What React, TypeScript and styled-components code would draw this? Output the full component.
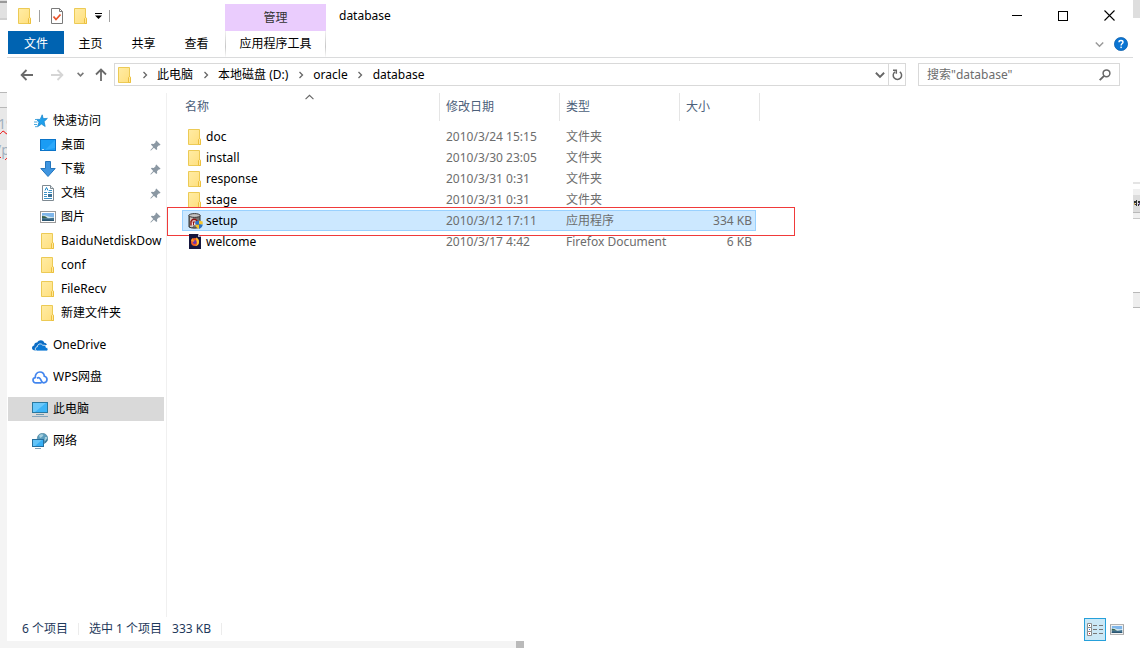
import React from "react";
import styled, { createGlobalStyle, css } from "styled-components";

const GlobalStyle = createGlobalStyle`
  * { box-sizing: border-box; }
  body {
    margin: 0;
    background: #fff;
    color: #000;
    font: 12px/16px "Noto Sans", "Noto Sans CJK SC", sans-serif;
  }
  button, input { font: inherit; color: inherit; }
  button { border: 0; padding: 0; background: none; white-space: nowrap; }
  svg { display: block; flex: none; }
`;

const Desktop = styled.div`
  display: grid;
  grid-template-columns: 7px minmax(0, 1fr) 7px;
  min-height: 100vh;
`;
const Edge = styled.div`
  display: flex;
  flex-direction: column;
  min-width: 0;
  overflow: hidden;
`;
const Band = styled.div<{ $h?: number; $c?: string }>`
  flex: ${(p) => (p.$h ? `0 0 ${p.$h}px` : "1")};
  background: ${(p) => p.$c ?? "#fff"};
`;
const EdgeText = styled.div<{ $h: number; $shift?: boolean }>`
  flex: 0 0 ${(p) => p.$h}px;
  background: #e8e8e8;
  color: #9fb0bf;
  font-size: 14px;
  line-height: 20px;
  white-space: nowrap;
  text-indent: ${(p) => (p.$shift ? "-4px" : "-2px")};
  text-decoration: underline wavy #e00 1px;
`;
const Middle = styled.div`
  display: flex;
  flex-direction: column;
  min-width: 0;
`;
const Window = styled.main`
  flex: 1;
  display: flex;
  flex-direction: column;
`;

const Header = styled.header`
  display: flex;
  height: 58px;
  border-bottom: 1px solid #dadbdc;
`;
const HeaderLeft = styled.div`
  width: 216px;
  margin-right: 2px;
  padding-left: 1px;
`;
const QuickAccess = styled.div`
  display: flex;
  align-items: center;
  height: 31px;
  padding-left: 10px;
`;
const QuickButton = styled.button<{ $w: number }>`
  width: ${(p) => p.$w}px;
  display: flex;
  justify-content: center;
`;
const QuickRule = styled.span`
  width: 1px;
  height: 12px;
  margin: 0 7px;
  background: #a0a0a0;
`;
const Tabs = styled.nav`
  display: flex;
  align-items: flex-start;
`;
const Tab = styled.button<{ $active?: boolean }>`
  width: ${(p) => (p.$active ? 56 : 53)}px;
  height: 23px;
  padding-top: 2px;
  ${(p) => p.$active && css`background: #0063b1; color: #fff;`}
`;
const Context = styled.div`
  width: 101px;
  padding-top: 4px;
`;
const ContextTitle = styled.div`
  height: 27px;
  line-height: 27px;
  text-align: center;
  color: #333;
  background: #eaccfd;
`;
const ContextTab = styled.button`
  width: 100%;
  height: 26px;
  padding-bottom: 1px;
  border: solid;
  border-width: 0 1px;
  border-image: linear-gradient(#f3f3f3, #c8c8c8 60%, #fff) 1;
`;
const HeaderRight = styled.div`
  flex: 1;
  min-width: 0;
`;
const TitleBar = styled.div`
  display: flex;
  height: 31px;
  padding-right: 1px;
`;
const Title = styled.h1`
  flex: 1;
  margin: 0;
  padding-left: 13px;
  font-size: 12px;
  font-weight: 400;
  line-height: 31px;
`;
const Caption = styled.button`
  width: 46px;
  display: flex;
  align-items: center;
  justify-content: center;
`;
const RibbonTools = styled.div`
  display: flex;
  justify-content: flex-end;
  align-items: center;
  gap: 10px;
  height: 26px;
  padding-right: 5px;
`;

const Toolbar = styled.div`
  display: flex;
  align-items: center;
  height: 35px;
  padding: 0 13px 2px 5px;
`;
const NavButton = styled.button<{ $w: number }>`
  width: ${(p) => p.$w}px;
  height: 21px;
  display: flex;
  align-items: center;
  justify-content: center;
`;
const AddressBox = styled.div`
  flex: 1;
  min-width: 0;
  display: flex;
  align-items: center;
  height: 23px;
  margin: 0 12px 0 2px;
  padding-left: 3px;
  border: 1px solid #d9d9d9;
`;
const Crumbs = styled.nav`
  flex: 1;
  display: flex;
  align-items: center;
  min-width: 0;
  overflow: hidden;
`;
const Crumb = styled.a`
  color: inherit;
  text-decoration: none;
  white-space: nowrap;
`;
const CrumbArrow = styled.span`
  width: 25px;
  display: flex;
  justify-content: center;
`;
const Refresh = styled(NavButton)`
  border-left: 1px solid #d9d9d9;
`;
const SearchBox = styled.label`
  display: flex;
  align-items: center;
  width: 202px;
  height: 23px;
  padding: 0 8px;
  border: 1px solid #d9d9d9;
`;
const SearchInput = styled.input`
  flex: 1;
  min-width: 0;
  padding: 0;
  border: 0;
  outline: 0;
  background: none;
  &::placeholder { color: #6d6d6d; opacity: 1; }
`;

const Body = styled.div`
  flex: 1;
  display: flex;
  min-height: 0;
`;
const Sidebar = styled.aside`
  width: 160px;
  flex: none;
  padding: 16px 2px 0 1px;
  border-right: 1px solid #f0f0f0;
`;
const NavGroup = styled.ul`
  margin: 0 0 8px;
  padding: 0;
  list-style: none;
`;
const NavItem = styled.a<{ $child?: boolean; $selected?: boolean }>`
  display: flex;
  align-items: center;
  gap: 5px;
  height: 24px;
  padding-left: ${(p) => (p.$child ? 32 : 24)}px;
  color: inherit;
  text-decoration: none;
  background: ${(p) => (p.$selected ? "#d9d9d9" : "none")};
`;
const NavIcon = styled.span`
  width: 16px;
  flex: none;
  display: flex;
  justify-content: center;
`;
const NavLabel = styled.span`
  flex: 1;
  min-width: 0;
  overflow: hidden;
  white-space: nowrap;
`;
const PinSlot = styled.span`
  padding-right: 3px;
`;

const Content = styled.section`
  flex: 1;
  min-width: 0;
  padding-left: 15px;
`;
const Files = styled.table`
  width: 578px;
  table-layout: fixed;
  border-collapse: separate;
  border-spacing: 0;
`;
const HeadCell = styled.th<{ $first?: boolean }>`
  position: relative;
  height: 28px;
  padding: 0 0 0 ${(p) => (p.$first ? 3 : 6)}px;
  border-right: 1px solid #e5e5e5;
  text-align: left;
  font-weight: 400;
  color: #4c607a;
`;
const SortMark = styled.span`
  position: absolute;
  top: 0;
  left: 50%;
  margin-left: -6px;
`;
const Spacer = styled.td`
  height: 5px;
  padding: 0;
`;
const Cell = styled.td`
  height: 21px;
  padding: 0 0 0 6px;
  color: #6d6d6d;
  white-space: nowrap;
`;
const NameCell = styled(Cell)`
  position: relative;
  color: #000;
`;
const SizeCell = styled(Cell)`
  padding-right: 4px;
  text-align: right;
`;
const Row = styled.tr<{ $selected?: boolean }>`
  ${(p) =>
    p.$selected &&
    css`
      & > ${Cell}, & > ${NameCell}, & > ${SizeCell} {
        background: #cce8ff;
        box-shadow: inset 0 1px #99d1ff, inset 0 -1px #99d1ff;
      }
      & > ${NameCell} {
        box-shadow: inset 1px 0 #99d1ff, inset 0 1px #99d1ff, inset 0 -1px #99d1ff;
      }
      & > ${SizeCell} {
        box-shadow: inset -1px 0 #99d1ff, inset 0 1px #99d1ff, inset 0 -1px #99d1ff;
      }
    `}
`;
const FileName = styled.span`
  display: flex;
  align-items: center;
  gap: 4px;
  height: 21px;
`;
const FileIcon = styled.span`
  width: 14px;
  display: flex;
  justify-content: center;
`;
const Marker = styled.span`
  position: absolute;
  top: -3px;
  left: -15px;
  width: 628px;
  height: 29px;
  border: 1px solid #f03a3a;
  pointer-events: none;
`;

const Status = styled.footer`
  display: flex;
  align-items: center;
  height: 24px;
  padding: 0 9px 0 15px;
  color: #1e395b;
`;
const StatusText = styled.span`
  margin-right: 10px;
  white-space: nowrap;
`;
const StatusRule = styled.span`
  width: 1px;
  height: 12px;
  margin-right: 10px;
  background: #ececec;
`;
const ViewButtons = styled.div`
  display: flex;
  align-items: center;
  gap: 4px;
  margin-left: auto;
`;
const ViewButton = styled.button<{ $on?: boolean }>`
  display: flex;
  align-items: center;
  justify-content: center;
  ${(p) => p.$on && css`width: 22px; height: 23px; background: #cbe8f6; border: 1px solid #26a0da;`}
`;
const BottomStrip = styled.div`
  display: flex;
  height: 7px;
`;

const Folder = () => (
  <svg width="14" height="16" viewBox="0 0 14 16" aria-hidden="true">
    <defs>
      <linearGradient id="folderFill" x1="0" y1="0" x2="1" y2="1">
        <stop offset="0" stopColor="#ffeca5" />
        <stop offset="1" stopColor="#ffdf7d" />
      </linearGradient>
    </defs>
    <path d="M.5.5h11v9l1 .5v5.500h-12z" fill="url(#folderFill)" stroke="#ecca55" />
    <path d="M10.500 15.500v-5l1-1 1 1v5z" fill="#ffe89b" stroke="#ecc03f" />
  </svg>
);
const Chevron = ({ dir, color = "#666", s = 8, t = 1.3 }: { dir: string; color?: string; s?: number; t?: number }) => {
  const d = { right: "M2.500 1l3 3-3 3", down: "M0.700 2.200L4 5.500l3.300-3.300", up: "M0.500 5.500L4 2l3.500 3.500" }[dir];
  return (
    <svg width={s} height={s} viewBox="0 0 8 8" fill="none" stroke={color} strokeWidth={t} aria-hidden="true">
      <path d={d} />
    </svg>
  );
};
const Arrow = ({ r = 0, color = "#6a6a6a" }: { r?: number; color?: string }) => (
  <svg width="14" height="14" viewBox="0 0 14 14" fill="none" stroke={color} strokeWidth="1.800" aria-hidden="true">
    <path d="M13 7H2M6.500 2L1.600 7l4.900 5" transform={`rotate(${r} 7 7)`} />
  </svg>
);
const Pin = () => (
  <svg width="11" height="11" viewBox="0 0 11 11" aria-label="已固定">
    <path d="M6.300.4l4.300 4.300-1 .7-.6-.2-2 2 .2 2-.9.900-2.400-2.400L1 10.500l-.6.1.1-.7 2.700-3L.9 4.600l.9-.8 2 .2 2-2.100-.3-.6z" fill="#8b98a3" />
  </svg>
);
const Picture = ({ w = 16, h = 12 }: { w?: number; h?: number }) => (
  <svg width={w} height={h} viewBox="0 0 16 12" aria-hidden="true">
    <rect x=".5" y=".5" width="15" height="11" fill="#fff" stroke="#9a9a9a" />
    <path d="M2 2h12v4H2z" fill="#7fb6ea" />
    <path d="M2 5c2-1 3-1 5 0s5 1 7 1v2H2z" fill="#d5e9ee" />
    <path d="M2 5l3 .3 3 2H2z" fill="#38604a" />
    <path d="M2 7l7 .3 5-.6V10H2z" fill="#41718f" />
    <path d="M2 8.500h7l5 .5v1H2z" fill="#2b5671" />
  </svg>
);
const Star = () => (
  <svg width="15" height="14" viewBox="0 0 15 14" aria-hidden="true">
    <path d="M9.200.8l1 3.800 4.200-.2-3.300 3.200 1.100 4.900-3.700-2.400-4 2.700 1.500-4.700-2.500-2.700 3.700 0z" fill="#1fa0ec" stroke="#1583c9" strokeWidth=".7" />
    <path d="M2 5.500h2M1 8h3.500M1 10.500h3M2 12.700h2" stroke="#4aa9e0" />
  </svg>
);
const Screen = () => (
  <svg width="16" height="12" viewBox="0 0 16 12" aria-hidden="true">
    <rect x=".5" y=".5" width="15" height="11" fill="#1a9cf4" stroke="#0b74c8" />
    <path d="M15 1v8L5 11z" fill="#3bb2ff" opacity=".6" />
    <path d="M2 10.500h2" stroke="#fff" strokeWidth=".7" />
  </svg>
);
const Download = () => (
  <svg width="16" height="16" viewBox="0 0 16 16" aria-hidden="true">
    <path d="M5.500.5h5v7h4.700L8 15.500.8 7.500h4.700z" fill="#3e95e0" stroke="#2576bd" />
  </svg>
);
const Doc = () => (
  <svg width="12" height="16" viewBox="0 0 12 16" aria-hidden="true">
    <path d="M.5.500h8l3 3v12H.5z" fill="#fff" stroke="#7f8a92" />
    <path d="M8.500.5v3h3" fill="#e3e8eb" stroke="#7f8a92" />
    <path d="M3 5.500L4.500 2.500 6 5.500" fill="none" stroke="#1a86c8" />
    <path d="M2 7.500h3M2 9.500h3M2 11.500h3M2 13.500h8M7 5.500h3M6 7.500h4" stroke="#3a92c7" />
    <path d="M6 9h4v3H6z" fill="#3a6f95" />
  </svg>
);
const Cloud = () => (
  <svg width="16" height="11" viewBox="0 0 16 11" aria-hidden="true">
    <path d="M3.700 10.500C1 10.500 0 9.500 0 8c0-1.400 1-2.300 2.200-2.400C2 3 4 2.200 5.200 2.500 6 .9 7.300.2 8.700.2c2 0 3.300 1.200 3.800 2.700 1.200 0 2 .5 2.500 1.600z" fill="#0a6cc4" />
    <path d="M5.500 11C4 11 3.300 10.200 3.300 9c0-1.300.9-2.100 2-2.200C5.500 4.800 6.700 3.900 8.200 3.900c1.200 0 2 .5 2.600 1.400 2-.6 3.300.6 3.300 2.200 1.200 0 1.900.7 1.900 1.700 0 1.100-.8 1.800-1.800 1.800z" fill="#0a78d4" stroke="#fff" strokeWidth=".8" />
  </svg>
);
const WpsCloud = () => (
  <svg width="16" height="13" viewBox="0 0 16 13" fill="none" stroke="#4386ee" strokeWidth="1.700" aria-hidden="true">
    <path d="M9.500 11.800H4C2.200 11.800 1 10.600 1 9.100c0-1.400 1-2.300 2.200-2.500C3.200 3.200 5.200 1 7.900 1c2.400 0 4.200 1.700 4.400 4.300 1.600.4 2.700 1.600 2.700 3.200 0 2-1.400 3.300-3.300 3.300-2.300 0-2.200-2.300-3.300-3.800C7.600 6.800 6 6.500 4.900 7.200" />
  </svg>
);
const Computer = () => (
  <svg width="16" height="15" viewBox="0 0 16 15" aria-hidden="true">
    <rect x=".5" y=".5" width="15" height="10" fill="#3db4f7" stroke="#2a789f" />
    <path d="M1 1h13L3 10H1z" fill="#7ed0fb" opacity=".7" />
    <path d="M4 12.500h8" stroke="#6f98ad" />
    <path d="M0 14.500h16" stroke="#86a6bd" />
  </svg>
);
const Network = () => (
  <svg width="16" height="16" viewBox="0 0 16 16" aria-hidden="true">
    <circle cx="10.500" cy="5.500" r="5.200" fill="#5b9dbd" stroke="#487f99" strokeWidth=".6" />
    <path d="M7 2.500c2-2 4-1.500 4.500-.5L10 4 8 5zM13 4l2 0 .3 2-1.300 3-1.500-2z" fill="#a5cfde" />
    <path d="M12.500 9l3-4c.3 2-.5 4-2.500 5z" fill="#3c7894" />
    <rect x=".5" y="6.500" width="11" height="7" fill="#37aff5" stroke="#266f9e" />
    <path d="M1 7h9l-7 6H1z" fill="#76cdf9" opacity=".7" />
    <path d="M3 15.500h6" stroke="#7fa0b5" />
  </svg>
);
const SetupIcon = () => (
  <svg width="15" height="16" viewBox="0 0 15 16" aria-hidden="true">
    <path d="M1 2.500h11v11.500c-2 1.500-9 1.500-11 0z" fill="#77736f" stroke="#333" />
    <path d="M2 4h3v10H2z" fill="#c9c6c2" />
    <ellipse cx="6.500" cy="2.500" rx="5.700" ry="1.900" fill="#c5c3c1" stroke="#393939" />
    <path d="M3 12.500V8.500l1.500-2h3L9 8v4" fill="#f4dede" stroke="#8e1515" strokeWidth="1.400" />
    <path d="M4.500 9h3M5.500 9v3" stroke="#8e1515" />
    <path d="M11 7.500l3.700 1v3h-3.700zM11 11.500V16c-2-1-3.700-2.500-3.700-4.500z" fill="#f5c52b" />
    <path d="M11 7.500l-3.700 1v3H11zM11 11.500V16c2-1 3.700-2.500 3.700-4.500z" fill="#2a72c8" />
  </svg>
);
const FirefoxIcon = () => (
  <svg width="12" height="15" viewBox="0 0 12 15" aria-hidden="true">
    <path d="M0 0h9l3 3v12H0z" fill="#15163e" />
    <path d="M9 0v3h3z" fill="#b9bad0" />
    <circle cx="6" cy="8" r="4" fill="#f25a28" />
    <path d="M7 3.500c3 1 4 5 2 7.300-1 1-2 1.200-3 1.200 2-1 2.800-2.500 1.500-4.500z" fill="#ffc52c" />
    <circle cx="5.700" cy="8" r="1.900" fill="#6b35b5" />
    <path d="M2 7c.5-2 1-2.500 1.500-3l1 2.200 1.500.5-1.500 1z" fill="#ff9a24" />
  </svg>
);

const quick = [
  { label: "桌面", icon: <Screen />, pinned: true },
  { label: "下载", icon: <Download />, pinned: true },
  { label: "文档", icon: <Doc />, pinned: true },
  { label: "图片", icon: <Picture />, pinned: true },
  { label: "BaiduNetdiskDow", icon: <Folder /> },
  { label: "conf", icon: <Folder /> },
  { label: "FileRecv", icon: <Folder /> },
  { label: "新建文件夹", icon: <Folder /> },
];
const roots = [
  { label: "OneDrive", icon: <Cloud /> },
  { label: "WPS网盘", icon: <WpsCloud /> },
  { label: "此电脑", icon: <Computer />, selected: true },
  { label: "网络", icon: <Network /> },
];
const files = [
  { name: "doc", date: "2010/3/24 15:15", type: "文件夹", size: "", icon: <Folder /> },
  { name: "install", date: "2010/3/30 23:05", type: "文件夹", size: "", icon: <Folder /> },
  { name: "response", date: "2010/3/31 0:31", type: "文件夹", size: "", icon: <Folder /> },
  { name: "stage", date: "2010/3/31 0:31", type: "文件夹", size: "", icon: <Folder /> },
  { name: "setup", date: "2010/3/12 17:11", type: "应用程序", size: "334 KB", icon: <SetupIcon />, selected: true },
  { name: "welcome", date: "2010/3/17 4:42", type: "Firefox Document", size: "6 KB", icon: <FirefoxIcon /> },
];
const crumbs = ["此电脑", "本地磁盘 (D:)", "oracle", "database"];

export default function App() {
  return (
    <Desktop>
      <GlobalStyle />
      <Edge>
        <Band $h={1} $c="#ddd" />
        <Band $h={2} $c="#999" />
        <Band $h={15} $c="#e1e1e1" />
        <Band $h={2} $c="#d0d0d0" />
        <Band $h={72} />
        <Band $h={1} $c="#b8b8b8" />
        <Band $h={14} $c="#f0f0f0" />
        <Band $h={1} $c="#b8b8b8" />
        <Band $h={6} $c="#e8e8e8" />
        <EdgeText $h={26}>19</EdgeText>
        <EdgeText $h={50} $shift>/p</EdgeText>
        <Band $c="#f4f4f4" />
      </Edge>
      <Middle>
        <Window>
          <Header>
            <HeaderLeft>
              <QuickAccess>
                <Folder />
                <QuickRule />
                <QuickButton $w={20} aria-label="属性">
                  <svg width="12" height="16" viewBox="0 0 12 16" fill="none">
                    <path d="M.5.500h8l3 3v12H.5z" fill="#fff" stroke="#7a7a7a" />
                    <path d="M8.500.5v3h3" stroke="#7a7a7a" />
                    <path d="M2.500 8.500l2.500 3 4.500-5" stroke="#e8532a" strokeWidth="1.800" />
                  </svg>
                </QuickButton>
                <QuickButton $w={27} aria-label="新建文件夹"><Folder /></QuickButton>
                <QuickButton $w={8} aria-label="自定义快速访问工具栏">
                  <svg width="7" height="6" viewBox="0 0 7 6"><path d="M0 0h7v1H0zM0 2.500h7L3.500 6z" fill="#000" /></svg>
                </QuickButton>
                <QuickRule />
              </QuickAccess>
              <Tabs>
                <Tab $active>文件</Tab>
                <Tab>主页</Tab>
                <Tab>共享</Tab>
                <Tab>查看</Tab>
              </Tabs>
            </HeaderLeft>
            <Context>
              <ContextTitle>管理</ContextTitle>
              <ContextTab>应用程序工具</ContextTab>
            </Context>
            <HeaderRight>
              <TitleBar>
                <Title>database</Title>
                <Caption aria-label="最小化">
                  <svg width="10" height="11" viewBox="0 0 10 11"><path d="M0 5.500h10" stroke="#000" /></svg>
                </Caption>
                <Caption aria-label="最大化">
                  <svg width="10" height="10" viewBox="0 0 10 10"><rect x=".5" y=".5" width="9" height="9" fill="none" stroke="#000" /></svg>
                </Caption>
                <Caption aria-label="关闭">
                  <svg width="11" height="11" viewBox="0 0 11 11"><path d="M.5.500l10 10M10.500.5l-10 10" stroke="#000" strokeWidth="1.100" /></svg>
                </Caption>
              </TitleBar>
              <RibbonTools>
                <button aria-label="展开功能区"><Chevron dir="down" color="#999" s={9} /></button>
                <button aria-label="帮助">
                  <svg width="14" height="14" viewBox="0 0 14 14">
                    <circle cx="7" cy="7" r="6.600" fill="#0a74d2" stroke="#0a5ba8" strokeWidth=".7" />
                    <path d="M5 5.200C5 3 9 3 9 5.200 9 6.600 7.100 6.600 7.100 8.400" fill="none" stroke="#fff" strokeWidth="1.400" />
                    <rect x="6.400" y="9.600" width="1.400" height="1.500" fill="#fff" />
                  </svg>
                </button>
              </RibbonTools>
            </HeaderRight>
          </Header>

          <Toolbar>
            <NavButton $w={30} aria-label="后退"><Arrow /></NavButton>
            <NavButton $w={30} aria-label="前进"><Arrow r={180} color="#d5d5d5" /></NavButton>
            <NavButton $w={17} aria-label="最近的位置"><Chevron dir="down" s={7} color="#777" t={1.8} /></NavButton>
            <NavButton $w={23} aria-label="上移"><Arrow r={90} /></NavButton>
            <AddressBox>
              <Folder />
              <Crumbs aria-label="地址">
                {crumbs.map((c) => (
                  <React.Fragment key={c}>
                    <CrumbArrow><Chevron dir="right" /></CrumbArrow>
                    <Crumb href="#">{c}</Crumb>
                  </React.Fragment>
                ))}
              </Crumbs>
              <NavButton $w={16} aria-label="以前的位置"><Chevron dir="down" s={10} t={1.5} /></NavButton>
              <Refresh $w={17} aria-label="刷新">
                <svg width="11" height="12" viewBox="0 0 11 12" fill="none" stroke="#666" strokeWidth="1.500">
                  <path d="M7.800 2.800A4.200 4.200 0 1 1 3 2.800" />
                  <path d="M1 1.200h3.300v3.500" />
                </svg>
              </Refresh>
            </AddressBox>
            <SearchBox>
              <SearchInput type="text" aria-label="搜索" placeholder={'搜索"database"'} />
              <svg width="12" height="12" viewBox="0 0 12 12" fill="none" stroke="#666" strokeWidth="1.500">
                <circle cx="7.500" cy="4.300" r="3.400" />
                <path d="M5.100 6.800L.7 11.200" strokeWidth="1.900" />
              </svg>
            </SearchBox>
          </Toolbar>

          <Body>
            <Sidebar>
              <NavGroup>
                <li><NavItem href="#"><NavIcon><Star /></NavIcon><NavLabel>快速访问</NavLabel></NavItem></li>
                {quick.map((q) => (
                  <li key={q.label}>
                    <NavItem href="#" $child>
                      <NavIcon>{q.icon}</NavIcon>
                      <NavLabel>{q.label}</NavLabel>
                      {q.pinned && <PinSlot><Pin /></PinSlot>}
                    </NavItem>
                  </li>
                ))}
              </NavGroup>
              {roots.map((r) => (
                <NavGroup key={r.label}>
                  <li>
                    <NavItem href="#" $selected={r.selected}>
                      <NavIcon>{r.icon}</NavIcon>
                      <NavLabel>{r.label}</NavLabel>
                    </NavItem>
                  </li>
                </NavGroup>
              ))}
            </Sidebar>
            <Content>
              <Files>
                <colgroup>
                  <col style={{ width: 258 }} />
                  <col style={{ width: 120 }} />
                  <col style={{ width: 120 }} />
                  <col style={{ width: 76 }} />
                  <col style={{ width: 4 }} />
                </colgroup>
                <thead>
                  <tr>
                    <HeadCell $first>名称<SortMark><Chevron dir="up" s={9} t={1} /></SortMark></HeadCell>
                    <HeadCell>修改日期</HeadCell>
                    <HeadCell>类型</HeadCell>
                    <HeadCell colSpan={2}>大小</HeadCell>
                  </tr>
                </thead>
                <tbody>
                  <tr><Spacer colSpan={5} /></tr>
                  {files.map((f) => (
                    <Row key={f.name} $selected={f.selected}>
                      <NameCell>
                        <FileName><FileIcon>{f.icon}</FileIcon>{f.name}</FileName>
                        {f.selected && <Marker />}
                      </NameCell>
                      <Cell>{f.date}</Cell>
                      <Cell>{f.type}</Cell>
                      <SizeCell>{f.size}</SizeCell>
                    </Row>
                  ))}
                </tbody>
              </Files>
            </Content>
          </Body>

          <Status>
            <StatusText>6 个项目</StatusText>
            <StatusRule />
            <StatusText>选中 1 个项目</StatusText>
            <StatusText>333 KB</StatusText>
            <StatusRule />
            <ViewButtons>
              <ViewButton $on aria-label="详细信息">
                <svg width="16" height="13" viewBox="0 0 16 13">
                  <path d="M.5.500h4v4h-4zM.5 4.500h4v4h-4zM.5 8.500h4v4h-4z" fill="#fff" stroke="#8c8c8c" />
                  <path d="M6 2.500h4M12 2.500h4M6 6.500h4M12 6.500h4M6 10.500h4M12 10.500h4" stroke="#777" />
                  <path d="M2 2h1v1H2z" fill="#444" /><path d="M2 6h1v1H2z" fill="#27d" /><path d="M2 10h1v1H2z" fill="#d22" />
                </svg>
              </ViewButton>
              <ViewButton aria-label="大图标"><Picture w={14} h={11} /></ViewButton>
            </ViewButtons>
          </Status>
        </Window>
        <BottomStrip>
          <Band $h={509} $c="#f4f4f4" />
          <Band $h={8} $c="#bababa" />
        </BottomStrip>
      </Middle>
      <Edge>
        <Band $h={18} $c="#dedede" />
        <Band $h={164} />
        <Band $h={2} $c="#e4e4e4" />
        <Band $h={5} />
        <Band $h={6} $c="#f0f0f0" />
        <Band $h={5} $c="#dcdcdc" />
        <svg width="7" height="7" viewBox="0 0 7 7">
          <path d="M0 0h7v7H0z" fill="#dcdcdc" />
          <path d="M1 1h2v2H1zM3 0h1v6H3zM5 1h2v2H5zM2 4h1v1H2zM5 4h1v2H5z" fill="#333" />
          <path d="M1 3h1v2H1z" fill="#c9a24b" /><path d="M6 3h1v2H6z" fill="#6b4ba0" />
        </svg>
        <Band $h={5} $c="#dcdcdc" />
        <Band $h={1} $c="#b8b8b8" />
        <Band $h={5} $c="#f0f0f0" />
        <Band $h={1} $c="#c8c8c8" />
        <Band $h={73} />
        <Band $h={1} $c="#b8b8b8" />
        <Band $h={14} $c="#eee" />
        <Band $h={1} $c="#b8b8b8" />
        <Band />
      </Edge>
    </Desktop>
  );
}
